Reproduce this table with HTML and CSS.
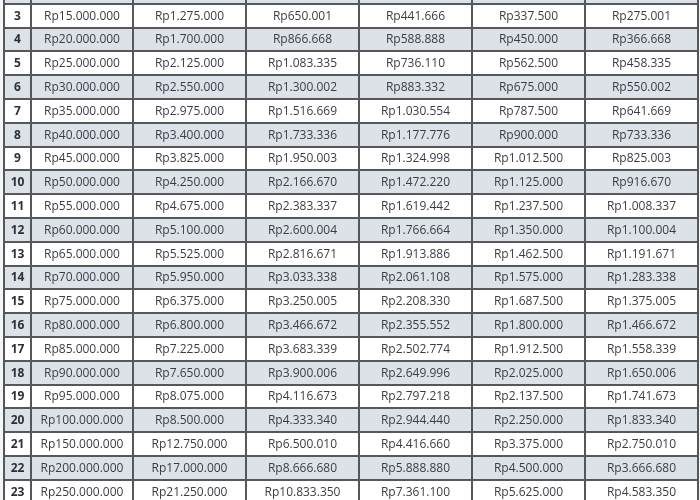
FILE: index.html
```html
<!DOCTYPE html>
<html>
<head>
<meta charset="utf-8">
<link rel="stylesheet" href="styles.css">
</head>
<body>
<div class="sheet">
<table class="loan">
<colgroup>
<col class="c-no"><col class="c-a"><col class="c-b"><col class="c-b"><col class="c-b"><col class="c-b"><col class="c-b">
</colgroup>
<tbody>
<tr class="even"><td class="no"></td><td></td><td></td><td></td><td></td><td></td><td></td></tr>
<tr><td class="no">3</td><td>Rp15.000.000</td><td>Rp1.275.000</td><td>Rp650.001</td><td>Rp441.666</td><td>Rp337.500</td><td>Rp275.001</td></tr>
<tr class="even"><td class="no">4</td><td>Rp20.000.000</td><td>Rp1.700.000</td><td>Rp866.668</td><td>Rp588.888</td><td>Rp450.000</td><td>Rp366.668</td></tr>
<tr><td class="no">5</td><td>Rp25.000.000</td><td>Rp2.125.000</td><td>Rp1.083.335</td><td>Rp736.110</td><td>Rp562.500</td><td>Rp458.335</td></tr>
<tr class="even"><td class="no">6</td><td>Rp30.000.000</td><td>Rp2.550.000</td><td>Rp1.300.002</td><td>Rp883.332</td><td>Rp675.000</td><td>Rp550.002</td></tr>
<tr><td class="no">7</td><td>Rp35.000.000</td><td>Rp2.975.000</td><td>Rp1.516.669</td><td>Rp1.030.554</td><td>Rp787.500</td><td>Rp641.669</td></tr>
<tr class="even"><td class="no">8</td><td>Rp40.000.000</td><td>Rp3.400.000</td><td>Rp1.733.336</td><td>Rp1.177.776</td><td>Rp900.000</td><td>Rp733.336</td></tr>
<tr><td class="no">9</td><td>Rp45.000.000</td><td>Rp3.825.000</td><td>Rp1.950.003</td><td>Rp1.324.998</td><td>Rp1.012.500</td><td>Rp825.003</td></tr>
<tr class="even"><td class="no">10</td><td>Rp50.000.000</td><td>Rp4.250.000</td><td>Rp2.166.670</td><td>Rp1.472.220</td><td>Rp1.125.000</td><td>Rp916.670</td></tr>
<tr><td class="no">11</td><td>Rp55.000.000</td><td>Rp4.675.000</td><td>Rp2.383.337</td><td>Rp1.619.442</td><td>Rp1.237.500</td><td>Rp1.008.337</td></tr>
<tr class="even"><td class="no">12</td><td>Rp60.000.000</td><td>Rp5.100.000</td><td>Rp2.600.004</td><td>Rp1.766.664</td><td>Rp1.350.000</td><td>Rp1.100.004</td></tr>
<tr><td class="no">13</td><td>Rp65.000.000</td><td>Rp5.525.000</td><td>Rp2.816.671</td><td>Rp1.913.886</td><td>Rp1.462.500</td><td>Rp1.191.671</td></tr>
<tr class="even"><td class="no">14</td><td>Rp70.000.000</td><td>Rp5.950.000</td><td>Rp3.033.338</td><td>Rp2.061.108</td><td>Rp1.575.000</td><td>Rp1.283.338</td></tr>
<tr><td class="no">15</td><td>Rp75.000.000</td><td>Rp6.375.000</td><td>Rp3.250.005</td><td>Rp2.208.330</td><td>Rp1.687.500</td><td>Rp1.375.005</td></tr>
<tr class="even"><td class="no">16</td><td>Rp80.000.000</td><td>Rp6.800.000</td><td>Rp3.466.672</td><td>Rp2.355.552</td><td>Rp1.800.000</td><td>Rp1.466.672</td></tr>
<tr><td class="no">17</td><td>Rp85.000.000</td><td>Rp7.225.000</td><td>Rp3.683.339</td><td>Rp2.502.774</td><td>Rp1.912.500</td><td>Rp1.558.339</td></tr>
<tr class="even"><td class="no">18</td><td>Rp90.000.000</td><td>Rp7.650.000</td><td>Rp3.900.006</td><td>Rp2.649.996</td><td>Rp2.025.000</td><td>Rp1.650.006</td></tr>
<tr><td class="no">19</td><td>Rp95.000.000</td><td>Rp8.075.000</td><td>Rp4.116.673</td><td>Rp2.797.218</td><td>Rp2.137.500</td><td>Rp1.741.673</td></tr>
<tr class="even"><td class="no">20</td><td>Rp100.000.000</td><td>Rp8.500.000</td><td>Rp4.333.340</td><td>Rp2.944.440</td><td>Rp2.250.000</td><td>Rp1.833.340</td></tr>
<tr><td class="no">21</td><td>Rp150.000.000</td><td>Rp12.750.000</td><td>Rp6.500.010</td><td>Rp4.416.660</td><td>Rp3.375.000</td><td>Rp2.750.010</td></tr>
<tr class="even"><td class="no">22</td><td>Rp200.000.000</td><td>Rp17.000.000</td><td>Rp8.666.680</td><td>Rp5.888.880</td><td>Rp4.500.000</td><td>Rp3.666.680</td></tr>
<tr><td class="no">23</td><td>Rp250.000.000</td><td>Rp21.250.000</td><td>Rp10.833.350</td><td>Rp7.361.100</td><td>Rp5.625.000</td><td>Rp4.583.350</td></tr>
</tbody>
</table>
</div>
</body>
</html>
```

FILE: styles.css
```css
html, body {
  margin: 0;
  padding: 0;
  background: #f4f5f6;
  overflow: hidden;
}
.sheet {
  padding-left: 3px;
  height: 500px;
  overflow: hidden;
}
.loan {
  margin-top: -21px;
  border-collapse: collapse;
  table-layout: fixed;
  width: 695px;
  font-family: "Open Sans", "Noto Sans", sans-serif;
  font-size: 12px;
  color: #3b3d42;
  background: #ffffff;
  filter: blur(0.3px);
}
.c-no { width: 27px; }
.c-a { width: 102px; }
.c-b { width: 113px; }
.loan tr {
  height: 23.8px;
}
.loan td {
  border: 2px solid #55575b;
  height: 21.8px;
  padding: 0;
  text-align: center;
  vertical-align: middle;
  line-height: 14px;
  white-space: nowrap;
}
.loan tr.even td {
  background: #dde1e8;
}
.loan td.no {
  font-weight: 700;
  color: #2e3034;
}
```
